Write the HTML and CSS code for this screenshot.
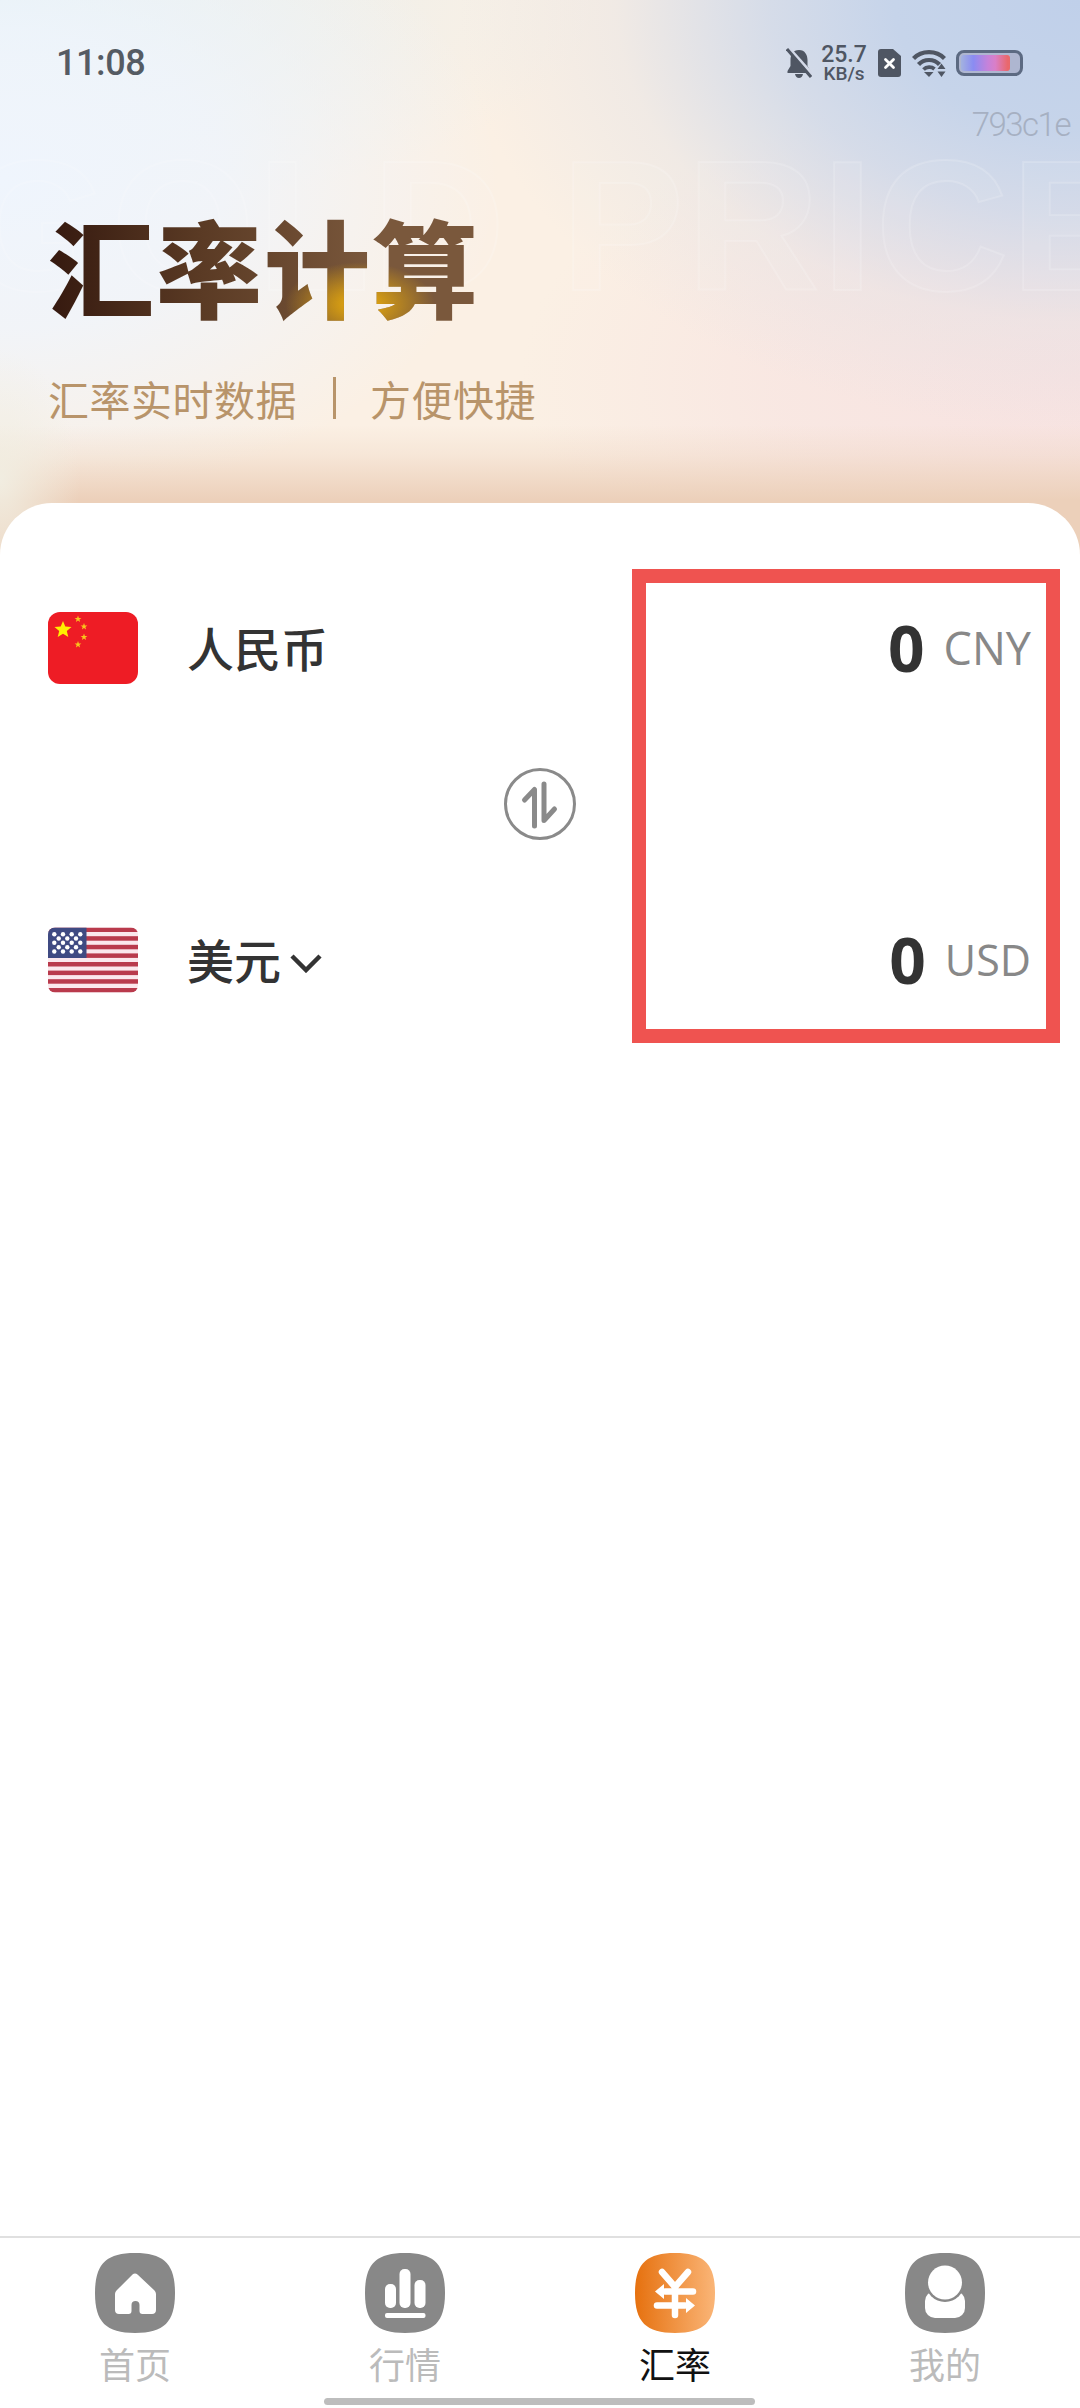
FILE: index.html
```html
<!DOCTYPE html>
<html>
<head>
  <title>汇率计算</title>
  <link rel="stylesheet" href="styles.css">
</head>
<body>
  <div class="page">
    <header class="hero">
      <div class="ghost-text">GOLD PRICE</div>
      <div class="build-tag">793c1e</div>

      <div class="status-bar">
        <span class="time">11:08</span>
        <div class="status-icons">
          <svg class="icon-bell" viewBox="0 0 26 30">
            <path d="M13 2C7 2 4.500 7 4.500 12V18L1.500 23V25H24.500V23L21.500 18V12C21.500 7 19 2 13 2Z" fill="#4f5663"/>
            <path d="M9 26H17C16.500 28.500 15 30 13 30C11 30 9.500 28.500 9 26Z" fill="#4f5663"/>
            <path d="M3 0L27 27" stroke="#d3d9e8" stroke-width="3"/>
            <path d="M1 1L25 29" stroke="#4f5663" stroke-width="3"/>
          </svg>
          <div class="speed">
            <span class="speed-value">25.7</span>
            <span class="speed-unit">KB/s</span>
          </div>
          <svg class="icon-sim" viewBox="0 0 23 28">
            <path d="M3 0H15L23 7V25C23 27 22 28 20 28H3C1 28 0 27 0 25V3C0 1 1 0 3 0Z" fill="#4f5663"/>
            <path d="M7.500 10.500L15.500 18.500M15.500 10.500L7.500 18.500" stroke="#fff" stroke-width="2.800" stroke-linecap="round"/>
          </svg>
          <svg class="icon-wifi" viewBox="0 0 34 28" fill="none">
            <path d="M1.500 9.500C9.500 1 24.500 1 32.500 9.500" stroke="#4f5663" stroke-width="4.200"/>
            <path d="M6.500 15.500C12 9.500 22 9.500 27.500 15.500" stroke="#4f5663" stroke-width="4.200"/>
            <path d="M11.500 20.500C14.500 17.500 19.500 17.500 22.500 20" stroke="#4f5663" stroke-width="3.800"/>
            <path d="M12 23H21.500L17 28Z" fill="#4f5663"/>
            <path d="M29.500 14.500L33.500 20H25.500ZM29.500 28L25.500 22.500H33.500Z" fill="#4f5663"/>
          </svg>
          <div class="battery"><div class="battery-fill"></div></div>
        </div>
      </div>

      <h1 class="title">汇率计算</h1>
      <div class="subtitle">
        <span>汇率实时数据</span>
        <i class="subtitle-sep"></i>
        <span>方便快捷</span>
      </div>
    </header>

    <main class="card">
      <div class="currency-col">
        <div class="currency-row">
          <svg class="flag" viewBox="0 0 90 72">
            <rect width="90" height="72" rx="12" fill="#ee1c25"/>
            <polygon points="15,9 17.300,14.500 23.500,15 18.800,18.900 20.300,25 15,21.700 9.700,25 11.200,18.900 6.500,15 12.700,14.500" fill="#ffef00"/>
            <polygon points="30,3.500 30.900,5.900 33.400,6 31.400,7.500 32.100,10 30,8.600 27.900,10 28.600,7.500 26.600,6 29.100,5.900" fill="#f9c51c"/>
            <polygon points="36,11 36.900,13.400 39.400,13.500 37.400,15 38.100,17.500 36,16.100 33.900,17.500 34.600,15 32.600,13.500 35.100,13.400" fill="#f9c51c"/>
            <polygon points="36,21.500 36.900,23.900 39.400,24 37.400,25.500 38.100,28 36,26.600 33.900,28 34.600,25.500 32.600,24 35.100,23.900" fill="#f9c51c"/>
            <polygon points="30,29 30.900,31.400 33.400,31.500 31.400,33 32.100,35.500 30,34.100 27.900,35.500 28.600,33 26.600,31.500 29.100,31.400" fill="#f9c51c"/>
          </svg>
          <span class="currency-name">人民币</span>
        </div>

        <div class="swap">
          <svg viewBox="0 0 72 72" fill="none">
            <circle cx="36" cy="36" r="34.500" stroke="#8a8a8a" stroke-width="3"/>
            <path d="M20.500 32L30.500 21.500V58" stroke="#8a8a8a" stroke-width="5" stroke-linecap="round" stroke-linejoin="round"/>
            <path d="M40 16V52.500L50.500 41" stroke="#8a8a8a" stroke-width="5" stroke-linecap="round" stroke-linejoin="round"/>
          </svg>
        </div>

        <div class="currency-row">
          <svg class="flag" viewBox="0 0 90 72">
            <defs>
              <clipPath id="us-clip"><rect y="3.500" width="90" height="65" rx="7"/></clipPath>
            </defs>
            <g clip-path="url(#us-clip)">
              <rect y="3.500" width="90" height="65" fill="#fbe7ec"/>
              <g fill="#b93a4c">
                <rect y="3.500" width="90" height="4.500"/>
                <rect y="12.200" width="90" height="4.500"/>
                <rect y="20.800" width="90" height="4.500"/>
                <rect y="29.400" width="90" height="4.500"/>
                <rect y="38" width="90" height="4.500"/>
                <rect y="46.600" width="90" height="4.500"/>
                <rect y="55.200" width="90" height="4.500"/>
                <rect y="64" width="90" height="4.500"/>
              </g>
              <rect y="3.500" width="38.500" height="30.500" fill="#3f4a82"/>
              <g fill="#fff">
                <circle cx="6.300" cy="10.200" r="2.200"/><circle cx="15" cy="10.200" r="2.200"/><circle cx="23.700" cy="10.200" r="2.200"/><circle cx="32.300" cy="10.200" r="2.200"/>
                <circle cx="10.700" cy="14.500" r="2.200"/><circle cx="19.300" cy="14.500" r="2.200"/><circle cx="28" cy="14.500" r="2.200"/>
                <circle cx="6.300" cy="18.800" r="2.200"/><circle cx="15" cy="18.800" r="2.200"/><circle cx="23.700" cy="18.800" r="2.200"/><circle cx="32.300" cy="18.800" r="2.200"/>
                <circle cx="10.700" cy="23.200" r="2.200"/><circle cx="19.300" cy="23.200" r="2.200"/><circle cx="28" cy="23.200" r="2.200"/>
                <circle cx="6.300" cy="27.500" r="2.200"/><circle cx="15" cy="27.500" r="2.200"/><circle cx="23.700" cy="27.500" r="2.200"/><circle cx="32.300" cy="27.500" r="2.200"/>
              </g>
            </g>
          </svg>
          <span class="currency-name">美元</span>
          <svg class="chevron" viewBox="0 0 32 20" fill="none">
            <path d="M2 3L16 17L30 3" stroke="#333" stroke-width="4.500"/>
          </svg>
        </div>
      </div>

      <div class="amount-box">
        <div class="amount-row">
          <span class="amount">0</span>
          <span class="code">CNY</span>
        </div>
        <div class="amount-row">
          <span class="amount">0</span>
          <span class="code code-usd">USD</span>
        </div>
      </div>
    </main>

    <nav class="tabbar">
      <a class="tab">
        <svg class="tab-icon" viewBox="0 0 80 80">
          <path d="M40 0C69 0 80 11 80 40C80 69 69 80 40 80C11 80 0 69 0 40C0 11 11 0 40 0Z" fill="#888"/>
          <path d="M37.500 21.500C39 20 41 20 42.500 21.500L59 37C60.300 38.300 61 39.500 61 41.500V57C61 59.500 59.500 61 57 61H47.500C45.500 61 44.500 60 44.500 58V52C44.500 49.500 43 48 40.500 48C38 48 36.500 49.500 36.500 52V58C36.500 60 35.500 61 33.500 61H24C21.500 61 20 59.500 20 57V41.500C20 39.500 20.700 38.300 22 37Z" fill="#fff"/>
        </svg>
        <span class="tab-label">首页</span>
      </a>
      <a class="tab">
        <svg class="tab-icon" viewBox="0 0 80 80">
          <path d="M40 0C69 0 80 11 80 40C80 69 69 80 40 80C11 80 0 69 0 40C0 11 11 0 40 0Z" fill="#888"/>
          <g fill="#fff">
            <rect x="20" y="31" width="11" height="24" rx="5"/>
            <rect x="34.500" y="16" width="11" height="39" rx="5"/>
            <rect x="49.500" y="27" width="11" height="28" rx="5"/>
            <rect x="20" y="60" width="40.500" height="5" rx="2"/>
          </g>
        </svg>
        <span class="tab-label">行情</span>
      </a>
      <a class="tab active">
        <svg class="tab-icon" viewBox="0 0 80 80">
          <defs>
            <linearGradient id="yen-bg" x1="0" y1="0" x2="1" y2="0">
              <stop offset="0" stop-color="#e6710f"/>
              <stop offset="1" stop-color="#fab577"/>
            </linearGradient>
          </defs>
          <path d="M40 0C69 0 80 11 80 40C80 69 69 80 40 80C11 80 0 69 0 40C0 11 11 0 40 0Z" fill="url(#yen-bg)"/>
          <g fill="none" stroke="#fff" stroke-width="6.500" stroke-linecap="round">
            <path d="M27 19L40 34L53 19"/>
            <path d="M40 34V62"/>
            <path d="M30 38.500H58"/>
            <path d="M22 52.500H50"/>
          </g>
          <path d="M29 31V46L20 38.500ZM51 45V60L60 52.500Z" fill="#fff"/>
        </svg>
        <span class="tab-label">汇率</span>
      </a>
      <a class="tab">
        <svg class="tab-icon" viewBox="0 0 80 80">
          <path d="M40 0C69 0 80 11 80 40C80 69 69 80 40 80C11 80 0 69 0 40C0 11 11 0 40 0Z" fill="#888"/>
          <rect x="20" y="38" width="40" height="27" rx="10" fill="#fff"/>
          <circle cx="40" cy="29.500" r="19.500" fill="#888"/>
          <circle cx="40" cy="29.500" r="17" fill="#fff"/>
        </svg>
        <span class="tab-label">我的</span>
      </a>
    </nav>

    <div class="home-indicator"></div>
  </div>
</body>
</html>
```

FILE: styles.css
```css
* {
  box-sizing: border-box;
}

body {
  margin: 0;
  background-color: #fff;
  font-family: "Noto Sans CJK SC", "Noto Sans", sans-serif;
}

.page {
  position: relative;
  display: flex;
  flex-direction: column;
  width: 1080px;
  height: 2408px;
  overflow: hidden;
}

/* top area */
.hero {
  position: relative;
  flex: none;
  height: 560px;
  padding: 44px 57px 0 48px;
  overflow: hidden;
  background-color: #fbf0e4;
  background-image:
    radial-gradient(ellipse 80px 130px at 0 480px, rgba(241, 238, 226, 0.95), rgba(241, 238, 226, 0)),
    linear-gradient(to bottom, rgba(236, 208, 186, 0) 425px, rgba(236, 208, 186, 0.3) 455px, #ecd0ba 500px),
    radial-gradient(ellipse 620px 430px at 1080px 0, #c0d0ea 0, #c6d4ea 30%, rgba(204, 215, 234, 0.8) 50%, rgba(225, 225, 230, 0.4) 75%, rgba(251, 240, 228, 0) 100%),
    radial-gradient(ellipse 560px 300px at 1080px 380px, #f7e2e1 0, rgba(247, 226, 225, 0.6) 55%, rgba(247, 226, 225, 0) 100%),
    radial-gradient(ellipse 500px 330px at 0 180px, #eff5fd 0, rgba(239, 245, 253, 0.8) 45%, rgba(239, 245, 253, 0) 100%),
    radial-gradient(ellipse 600px 220px at 0 0, #e3eff1 0, rgba(227, 239, 241, 0) 100%);
}

.ghost-text {
  position: absolute;
  top: 121px;
  left: -35px;
  font-family: "Liberation Sans", sans-serif;
  font-size: 185px;
  font-weight: 700;
  line-height: 210px;
  letter-spacing: 2px;
  white-space: nowrap;
  color: rgba(255, 255, 255, 0.06);
  -webkit-text-stroke: 2px rgba(255, 255, 255, 0.16);
}

.build-tag {
  position: absolute;
  top: 103px;
  right: 10px;
  font-family: Roboto, sans-serif;
  font-size: 33px;
  font-weight: 300;
  line-height: 44px;
  letter-spacing: -1.5px;
  color: #a6b0c2;
}

.status-bar {
  position: relative;
  display: flex;
  align-items: center;
  justify-content: space-between;
  height: 38px;
  padding-left: 8px;
}

.time {
  font-family: Roboto, sans-serif;
  font-size: 36px;
  font-weight: 500;
  line-height: 38px;
  letter-spacing: -0.4px;
  color: #555b63;
}

.status-icons {
  display: flex;
  align-items: center;
}

.icon-bell {
  width: 26px;
  height: 30px;
}

.speed {
  display: flex;
  flex-direction: column;
  align-items: center;
  width: 42px;
  margin-left: 11px;
  font-family: Roboto, sans-serif;
  font-weight: 500;
  color: #4f5663;
}

.speed-value {
  font-size: 23px;
  line-height: 21px;
}

.speed-unit {
  font-size: 19px;
  line-height: 17px;
}

.icon-sim {
  width: 23px;
  height: 28px;
  margin-left: 13px;
}

.icon-wifi {
  width: 34px;
  height: 28px;
  margin-left: 11px;
}

.battery {
  width: 67px;
  height: 26px;
  margin-left: 10px;
  padding: 2px;
  border: 3px solid #5c6a82;
  border-radius: 8px;
  background-color: #aeb6d0;
}

.battery-fill {
  width: 86%;
  height: 100%;
  border-radius: 3px;
  background: linear-gradient(to right, #a3b2df, #8a8cf2 25%, #c682da 55%, #d97fc8 70%, #e9686c 95%);
}

.title {
  position: relative;
  width: fit-content;
  margin: 122px 0 0 0;
  font-size: 106px;
  font-weight: 900;
  line-height: 120px;
  letter-spacing: 2px;
  color: transparent;
  background-image:
    radial-gradient(ellipse 75px 42px at 312px 100px, #dfa40f 15%, rgba(223, 164, 15, 0) 100%),
    linear-gradient(to right, #35190f, #5a3a24 35%, #7a583c 75%);
  -webkit-background-clip: text;
  background-clip: text;
}

.subtitle {
  position: relative;
  display: flex;
  align-items: center;
  margin-top: 46px;
  font-size: 41px;
  line-height: 56px;
  letter-spacing: 0.5px;
  color: #b8946a;
}

.subtitle-sep {
  width: 3px;
  height: 42px;
  margin: 0 34px 0 36px;
  background-color: #b8946a;
}

/* converter */
.card {
  position: relative;
  flex: 1;
  display: flex;
  align-items: flex-start;
  margin-top: -57px;
  padding-top: 66px;
  border-radius: 52px 52px 0 0;
  background-color: #fff;
}

.currency-col {
  display: flex;
  flex-direction: column;
  gap: 84px;
  width: 576px;
  margin-top: 43px;
  padding-left: 48px;
}

.currency-row {
  display: flex;
  align-items: center;
  height: 72px;
}

.flag {
  flex: none;
  width: 90px;
  height: 72px;
}

.currency-name {
  margin: -3px 0 0 49px;
  font-size: 47px;
  font-weight: 500;
  line-height: 60px;
  color: #333;
}

.chevron {
  width: 32px;
  height: 20px;
  margin: 6px 0 0 9px;
}

.swap {
  align-self: flex-end;
  width: 72px;
  height: 72px;
}

.swap svg {
  display: block;
  width: 72px;
  height: 72px;
}

.amount-box {
  display: flex;
  flex-direction: column;
  justify-content: space-between;
  width: 428px;
  height: 474px;
  margin-left: 56px;
  padding: 29px 15px 33px 0;
  border: 14px solid #ef5350;
}

.amount-row {
  display: flex;
  align-items: center;
  justify-content: flex-end;
  height: 72px;
  font-family: "Open Sans", sans-serif;
}

.amount {
  font-size: 64px;
  font-weight: 700;
  line-height: 72px;
  color: #333;
}

.code {
  min-width: 85px;
  margin-left: 19px;
  font-size: 45px;
  line-height: 72px;
  text-align: right;
  color: #888;
}

.code-usd {
  font-size: 43px;
}

/* bottom tabs */
.tabbar {
  flex: none;
  display: grid;
  grid-template-columns: repeat(4, 1fr);
  height: 172px;
  padding-top: 15px;
  border-top: 2px solid #e0e0e0;
  background-color: #fff;
}

.tab {
  display: flex;
  flex-direction: column;
  align-items: center;
}

.tab-icon {
  display: block;
  width: 80px;
  height: 80px;
}

.tab-label {
  margin-top: 6px;
  font-size: 36px;
  line-height: 48px;
  color: #bbb;
}

.tab.active .tab-label {
  color: #111;
}

.home-indicator {
  position: absolute;
  bottom: 3px;
  left: 324px;
  width: 431px;
  height: 7px;
  border-radius: 4px;
  background-color: #bdbdbd;
}
```
